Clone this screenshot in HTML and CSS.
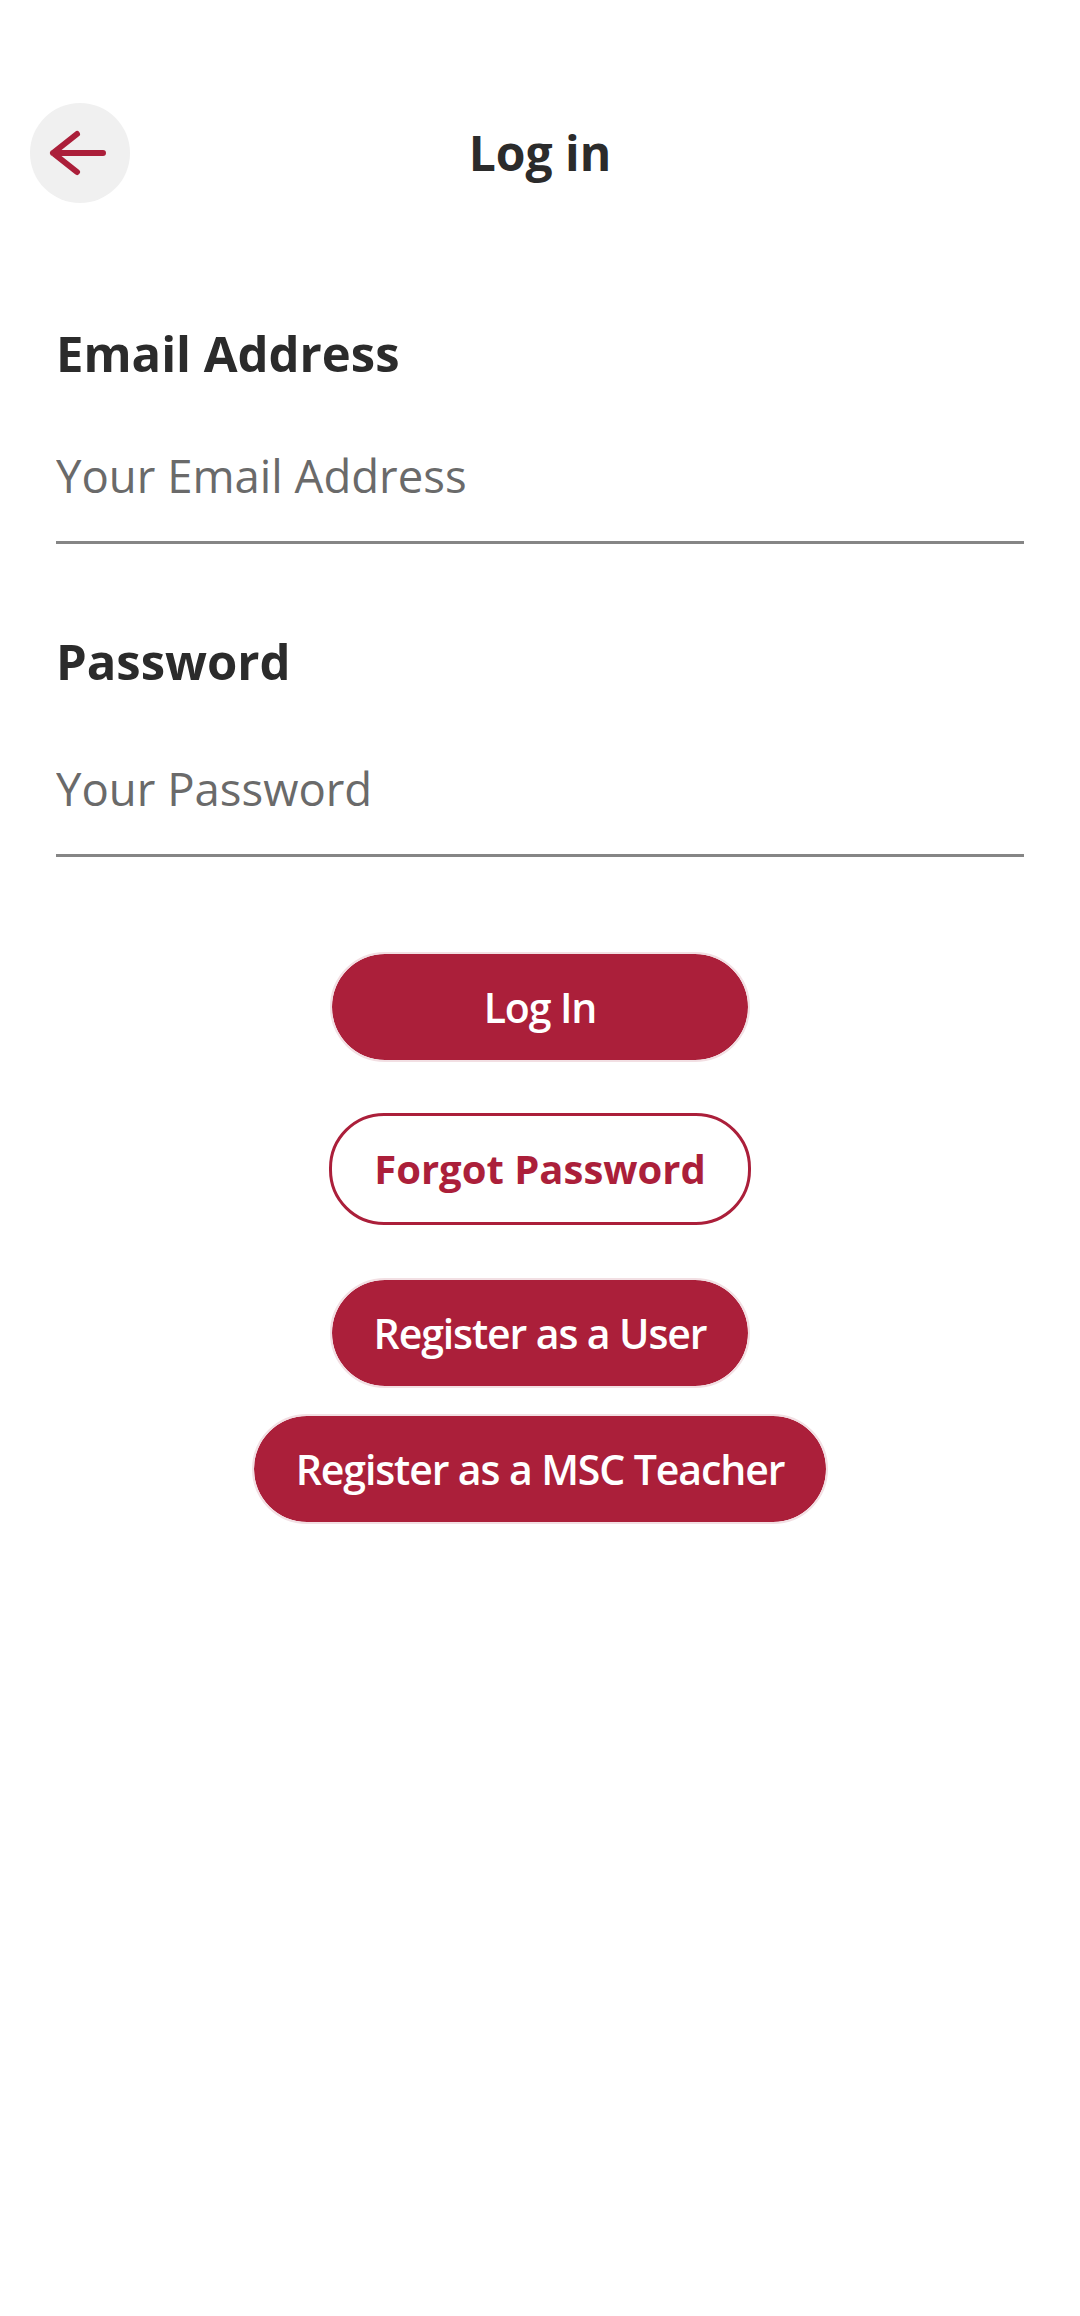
FILE: index.html
```html
<!DOCTYPE html>
<html lang="en">
<head>
<meta charset="utf-8">
<title>Log in</title>
<link rel="stylesheet" href="styles.css">
</head>
<body>
<div class="screen">
  <header class="topbar">
    <div class="topbar-left">
      <button class="back" aria-label="Back">
        <svg viewBox="0 0 100 100" width="100" height="100">
          <path d="M47 31 L23 50 L47 69 M23 50 L73 50" fill="none" stroke="#ab1f3a" stroke-width="6" stroke-linecap="round" stroke-linejoin="round"/>
        </svg>
      </button>
    </div>
    <h1 class="title">Log in</h1>
    <div class="topbar-right"></div>
  </header>

  <form class="form">
    <div class="field">
      <label class="label" for="email">Email Address</label>
      <input class="input" id="email" type="email" placeholder="Your Email Address">
    </div>
    <div class="field field-second">
      <label class="label" for="password">Password</label>
      <input class="input" id="password" type="password" placeholder="Your Password">
    </div>
  </form>

  <div class="actions">
    <button class="btn btn-fill btn-login">Log In</button>
    <button class="btn btn-outline btn-forgot">Forgot Password</button>
    <button class="btn btn-fill btn-user">Register as a User</button>
    <button class="btn btn-fill btn-teacher">Register as a MSC Teacher</button>
  </div>
</div>
</body>
</html>
```
FILE: styles.css
```css
* {
  box-sizing: border-box;
}

html, body {
  margin: 0;
  padding: 0;
  background: #ffffff;
}

body {
  font-family: "Open Sans", "Noto Sans", Roboto, sans-serif;
  color: #2b2b2b;
  width: 1080px;
  min-height: 2316px;
}

.screen {
  display: flex;
  flex-direction: column;
}

.topbar {
  display: grid;
  grid-template-columns: 1fr auto 1fr;
  align-items: center;
  padding-top: 103px;
  height: 203px;
}

.topbar-left {
  padding-left: 30px;
}

.back {
  width: 100px;
  height: 100px;
  border-radius: 50%;
  border: none;
  background: #f0f0f0;
  padding: 0;
  margin: 0;
  display: flex;
  align-items: center;
  justify-content: center;
}

.back svg {
  display: block;
}

.title {
  margin: 0;
  font-size: 48px;
  font-weight: 700;
  line-height: 64px;
  color: #2b2b2b;
  text-align: center;
}

.form {
  padding: 118px 56px 0;
  display: flex;
  flex-direction: column;
}

.field {
  display: flex;
  flex-direction: column;
}

.field-second {
  margin-top: 85px;
}

.label {
  font-size: 49px;
  font-weight: 700;
  line-height: 64px;
  color: #2b2b2b;
  margin-bottom: 24px;
}

.field-second .label {
  margin-bottom: 29px;
}

.input {
  height: 135px;
  border: none;
  border-bottom: 3px solid #858585;
  padding: 0;
  margin: 0;
  font-family: "Open Sans", "Noto Sans", sans-serif;
  font-size: 45.5px;
  color: #2b2b2b;
  background: transparent;
  outline: none;
}

.input::placeholder {
  color: #6a6a6a;
  opacity: 1;
}

.actions {
  display: flex;
  flex-direction: column;
  align-items: center;
  padding-top: 95px;
}

.btn {
  height: 110px;
  min-width: 420px;
  padding: 0 42px;
  border-radius: 55px;
  font-family: "Open Sans", "Noto Sans", sans-serif;
  font-size: 41px;
  letter-spacing: -1.1px;
  line-height: 1;
  display: flex;
  align-items: center;
  justify-content: center;
  margin: 0;
}

.btn-fill {
  background: #ab1f3a;
  color: #ffffff;
  border: 2px solid #f2dfe3;
  font-weight: 600;
  background-clip: padding-box;
}

.btn-outline {
  background: #ffffff;
  color: #ab1f3a;
  border: 3px solid #ab1f3a;
  font-weight: 700;
  font-size: 40px;
  letter-spacing: 0;
  height: 112px;
}

.btn-forgot {
  margin-top: 51px;
}

.btn-user {
  margin-top: 53px;
}

.btn-teacher {
  margin-top: 26px;
}
```
